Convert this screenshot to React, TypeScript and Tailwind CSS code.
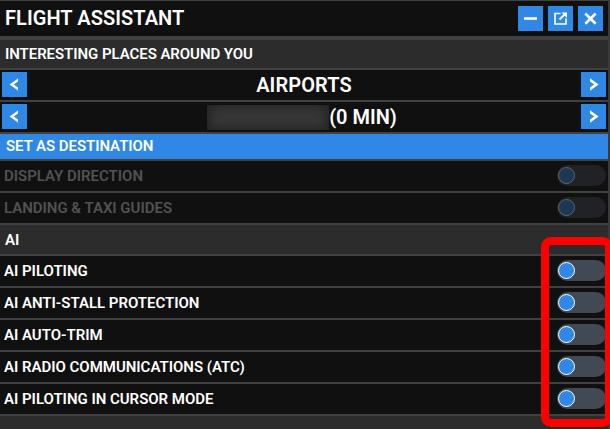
import type { ReactNode } from "react";

function SquareButton({ label, children }: { label: string; children: ReactNode }) {
  return (
    <button aria-label={label} className="flex size-[25px] shrink-0 items-center justify-center bg-[#2f88e6] text-white">
      <svg width="25" height="25" viewBox="0 0 25 25" fill="none" stroke="currentColor">
        {children}
      </svg>
    </button>
  );
}

function Selector({ children }: { children: ReactNode }) {
  return (
    <div className="flex h-8 items-start justify-between border-b-2 border-[#414143] bg-[#101010] px-[2px] pt-[2px]">
      <SquareButton label="Previous">
        <path d="M7.6 12.5 L16 6.5 V9.6 L11.8 12.5 L16 15.4 V18.5 Z" fill="currentColor" stroke="none" />
      </SquareButton>
      <div className="flex h-[25px] items-center text-xl font-semibold whitespace-nowrap">{children}</div>
      <SquareButton label="Next">
        <path d="M17.6 12.5 L9 6.2 V9.4 L13.2 12.5 L9 15.6 V18.8 Z" fill="currentColor" stroke="none" />
      </SquareButton>
    </div>
  );
}

function ToggleRow({ label, disabled = false }: { label: string; disabled?: boolean }) {
  return (
    <div className="flex h-8 items-start justify-between border-b-2 border-[#414143] bg-[#101010] pr-[2px] pl-1">
      <span className={`leading-[30px] ${disabled ? "text-[#525252]" : "text-white"}`}>{label}</span>
      <span className={`mt-1 flex h-[21px] w-[49px] rounded-full pt-[2px] pl-[0.5px] ${disabled ? "bg-[#202226]" : "bg-[#434953]"}`}>
        <span className={`size-[17px] rounded-full border ${disabled ? "border-[#626466] bg-[#1b3858]" : "border-white bg-[#2f88e6]"}`} />
      </span>
    </div>
  );
}

export default function App() {
  return (
    <div className="relative h-[429px] w-[610px] overflow-hidden bg-[#3a3a3b] pr-[2px] font-['Roboto',sans-serif] text-[15px] font-semibold tracking-[-0.02px] text-white">
      <div className="h-full bg-[#2c2c2d]">
        <div className="flex h-10 items-start justify-between border-t border-b-4 border-[#414143] bg-[#101010] pt-[5px] pr-[5px] pl-[5px]">
          <h1 className="text-xl leading-[25px] font-semibold tracking-[0.06px]">FLIGHT ASSISTANT</h1>
          <div className="flex gap-[5px]">
            <SquareButton label="Minimize">
              <path d="M6 12.5 H19" strokeWidth="2.6" />
            </SquareButton>
            <SquareButton label="Pop out">
              <path d="M12.5 7.5 H7 V18 H18 V12.5" strokeWidth="1.6" />
              <path d="M11.5 13.5 L16.5 8.5" strokeWidth="1.8" />
              <path d="M13.5 6.5 H19 V12 Z" fill="currentColor" stroke="none" />
            </SquareButton>
            <SquareButton label="Close">
              <path d="M7.3 7.5 L17.7 17.7 M17.7 7.5 L7.3 17.7" strokeWidth="2.6" />
            </SquareButton>
          </div>
        </div>
        <div className="h-[30px] border-b-2 border-[#414143] pl-[5px] leading-[28px] tracking-[-0.06px]">INTERESTING PLACES AROUND YOU</div>
        <Selector>
          <span className="tracking-[0.1px]">AIRPORTS</span>
        </Selector>
        <Selector>
          <span className="mt-[2px] h-[25px] w-[122px] bg-[#3a3a3a] shadow-[inset_0_0_14px_2px_#202020]" />
          <span className="mr-[4px]">(0 MIN)</span>
        </Selector>
        <div className="h-[27px] border-b-2 border-[#414143] bg-[#2f88e6] pl-[6px] leading-[24px] tracking-[-0.06px]">SET AS DESTINATION</div>
        <ToggleRow label="DISPLAY DIRECTION" disabled />
        <ToggleRow label="LANDING & TAXI GUIDES" disabled />
        <div className="h-[31px] border-b-2 border-[#414143] pl-[5px] leading-[30px]">AI</div>
        <ToggleRow label="AI PILOTING" />
        <ToggleRow label="AI ANTI-STALL PROTECTION" />
        <ToggleRow label="AI AUTO-TRIM" />
        <ToggleRow label="AI RADIO COMMUNICATIONS (ATC)" />
        <ToggleRow label="AI PILOTING IN CURSOR MODE" />
      </div>
      <div className="absolute top-[237px] left-[541px] h-[190px] w-[72px] rounded-[10px] border-8 border-[#fe0000]" />
    </div>
  );
}
